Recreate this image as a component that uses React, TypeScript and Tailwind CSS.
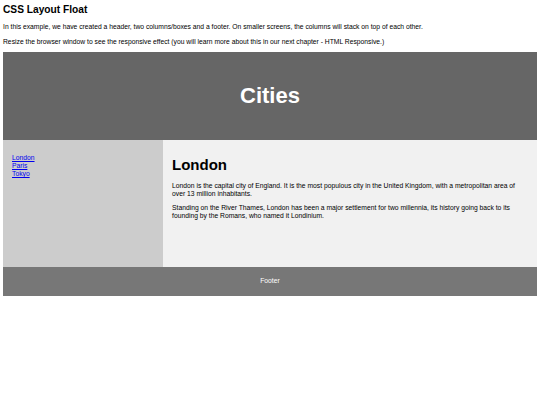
export default function App() {
  return (
    <div className="min-h-[405px] bg-white px-[3px] text-black" style={{ fontFamily: '"Liberation Sans", Arial, sans-serif' }}>
      <h2 className="pt-[4px] text-[10.2px] font-bold leading-[12px]">CSS Layout Float</h2>
      <p className="mt-[7px] text-[6.75px] leading-[8px]">
        In this example, we have created a header, two columns/boxes and a footer. On smaller screens, the columns will stack on top of each other.
      </p>
      <p className="mt-[7px] text-[6.75px] leading-[8px]">
        Resize the browser window to see the responsive effect (you will learn more about this in our next chapter - HTML Responsive.)
      </p>

      <header className="mt-[6px] flex h-[88px] items-center justify-center bg-[#666666]">
        <h2 className="text-[22px] font-bold leading-none text-white">Cities</h2>
      </header>

      <section className="flex h-[127px]">
        <nav className="w-[160px] bg-[#cccccc] px-[9px] pt-[14px]">
          <ul className="text-[6.75px] leading-[8px] text-[#0000ee] underline">
            <li><a href="#">London</a></li>
            <li><a href="#">Paris</a></li>
            <li><a href="#">Tokyo</a></li>
          </ul>
        </nav>
        <article className="flex-1 bg-[#f1f1f1] px-[9px] pt-[16px]">
          <h1 className="text-[15px] font-bold leading-[18px]">London</h1>
          <p className="mt-[8px] text-[6.75px] leading-[7.5px]">
            London is the capital city of England. It is the most populous city in the United Kingdom, with a metropolitan area of over 13 million inhabitants.
          </p>
          <p className="mt-[7px] text-[6.75px] leading-[7.5px]">
            Standing on the River Thames, London has been a major settlement for two millennia, its history going back to its founding by the Romans, who named it Londinium.
          </p>
        </article>
      </section>

      <footer className="flex h-[29px] items-center justify-center bg-[#777777] text-[6.75px] text-white">
        <p>Footer</p>
      </footer>
    </div>
  );
}
